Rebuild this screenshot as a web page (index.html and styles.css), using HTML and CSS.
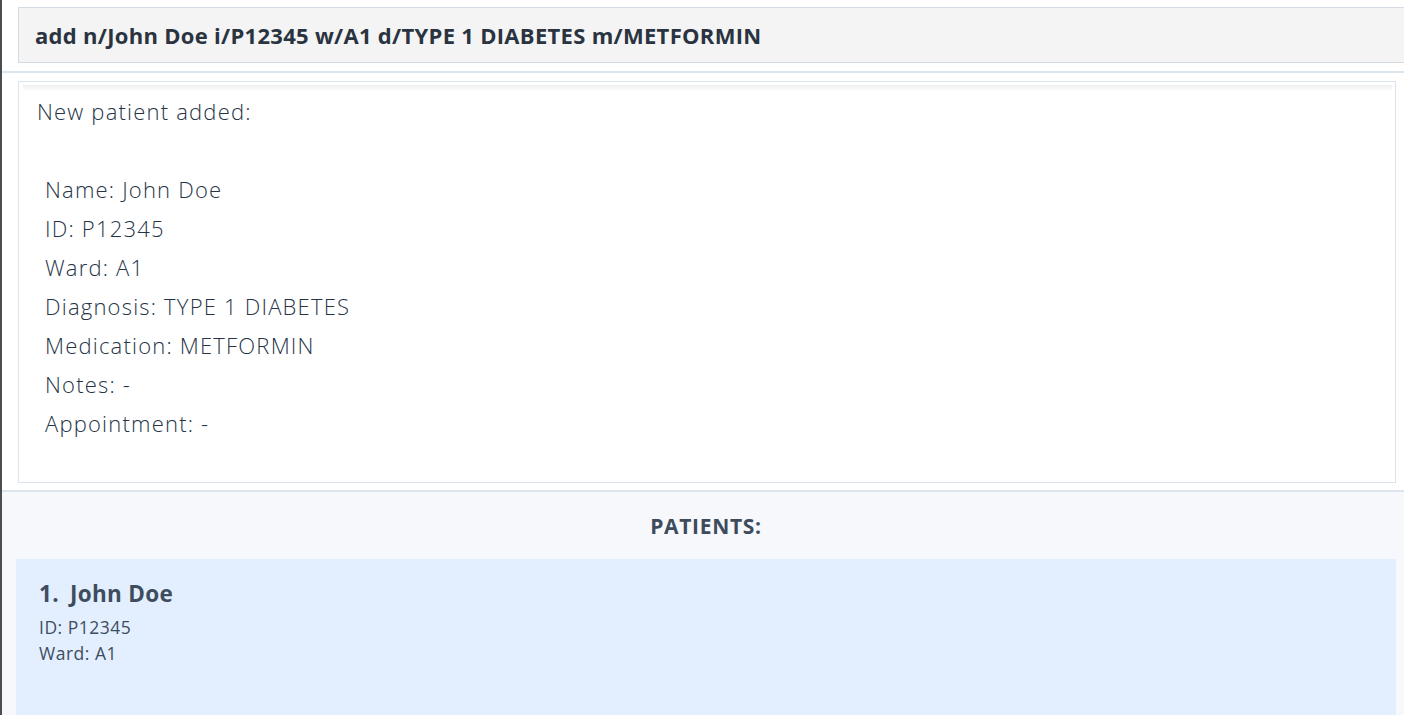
FILE: index.html
```html
<!DOCTYPE html>
<html>
<head>
<meta charset="utf-8">
<link rel="stylesheet" href="styles.css">
</head>
<body>
<div class="app">
  <div class="command-area">
    <div class="command-box">add n/John Doe i/P12345 w/A1 d/TYPE 1 DIABETES m/METFORMIN</div>
  </div>
  <div class="sep"></div>
  <div class="result-area">
    <div class="result-box">
      <div class="result-shadow"></div>
      <div class="result-text">
        <div class="line">New patient added:</div>
        <div class="line">&nbsp;</div>
        <div class="line indent">Name: John Doe</div>
        <div class="line indent">ID: P12345</div>
        <div class="line indent">Ward: A1</div>
        <div class="line indent">Diagnosis: TYPE 1 DIABETES</div>
        <div class="line indent">Medication: METFORMIN</div>
        <div class="line indent">Notes: -</div>
        <div class="line indent">Appointment: -</div>
      </div>
    </div>
  </div>
  <div class="sep"></div>
  <div class="list-panel">
    <div class="list-title">PATIENTS:</div>
    <div class="card">
      <div class="card-title"><span class="num">1.</span>John Doe</div>
      <div class="card-field">ID: P12345</div>
      <div class="card-field">Ward: A1</div>
    </div>
  </div>
</div>
</body>
</html>
```
FILE: styles.css
```css
html, body {
  margin: 0;
  padding: 0;
  height: 100%;
  overflow: hidden;
}
body {
  background: #ffffff;
  font-family: "Open Sans", "Noto Sans", "Liberation Sans", sans-serif;
  color: #2c3a4a;
}
.app {
  border-left: 2px solid #4a4d52;
  height: 100%;
  display: flex;
  flex-direction: column;
}
.command-area {
  padding: 7px 0 8px 16px;
}
.command-box {
  box-sizing: border-box;
  height: 56px;
  border: 1px solid #d4dbe3;
  border-right: none;
  background: #f4f4f4;
  display: flex;
  align-items: center;
  padding-left: 16px;
  font-weight: 700;
  font-size: 22px;
  letter-spacing: 0.3px;
  color: #2a3340;
}
.sep {
  height: 2px;
  background: #dce4ec;
  flex: none;
}
.result-area {
  padding: 8px 8px 7px 16px;
}
.result-box {
  height: 402px;
  box-sizing: border-box;
  border: 1px solid #dbe3ec;
  background: #ffffff;
  padding: 3px;
}
.result-shadow {
  height: 6px;
  background: linear-gradient(#eeeeee, #ffffff);
  margin: 0 0 0 1px;
}
.result-text {
  padding: 0 0 0 15px;
  margin-top: 1px;
  font-weight: 300;
  font-size: 22px;
  letter-spacing: 1.2px;
  line-height: 39px;
  color: #263446;
}
.indent {
  padding-left: 8px;
}
.list-panel {
  flex: 1;
  background: #f6f8fc;
  padding: 0 8px 0 14px;
}
.list-title {
  text-align: center;
  font-weight: 700;
  font-size: 21px;
  letter-spacing: 0.7px;
  color: #3d4b5c;
  height: 67px;
  line-height: 68px;
}
.card {
  background: #e3effe;
  height: 200px;
  padding: 19px 0 0 23px;
  box-sizing: border-box;
  color: #3e4d5e;
}
.card-title {
  font-weight: 700;
  font-size: 22.5px;
  letter-spacing: 0.3px;
  line-height: 32px;
  margin-bottom: 4px;
}
.num {
  display: inline-block;
  width: 31px;
}
.card-field {
  font-size: 17.5px;
  letter-spacing: 0.5px;
  line-height: 26px;
}
```
